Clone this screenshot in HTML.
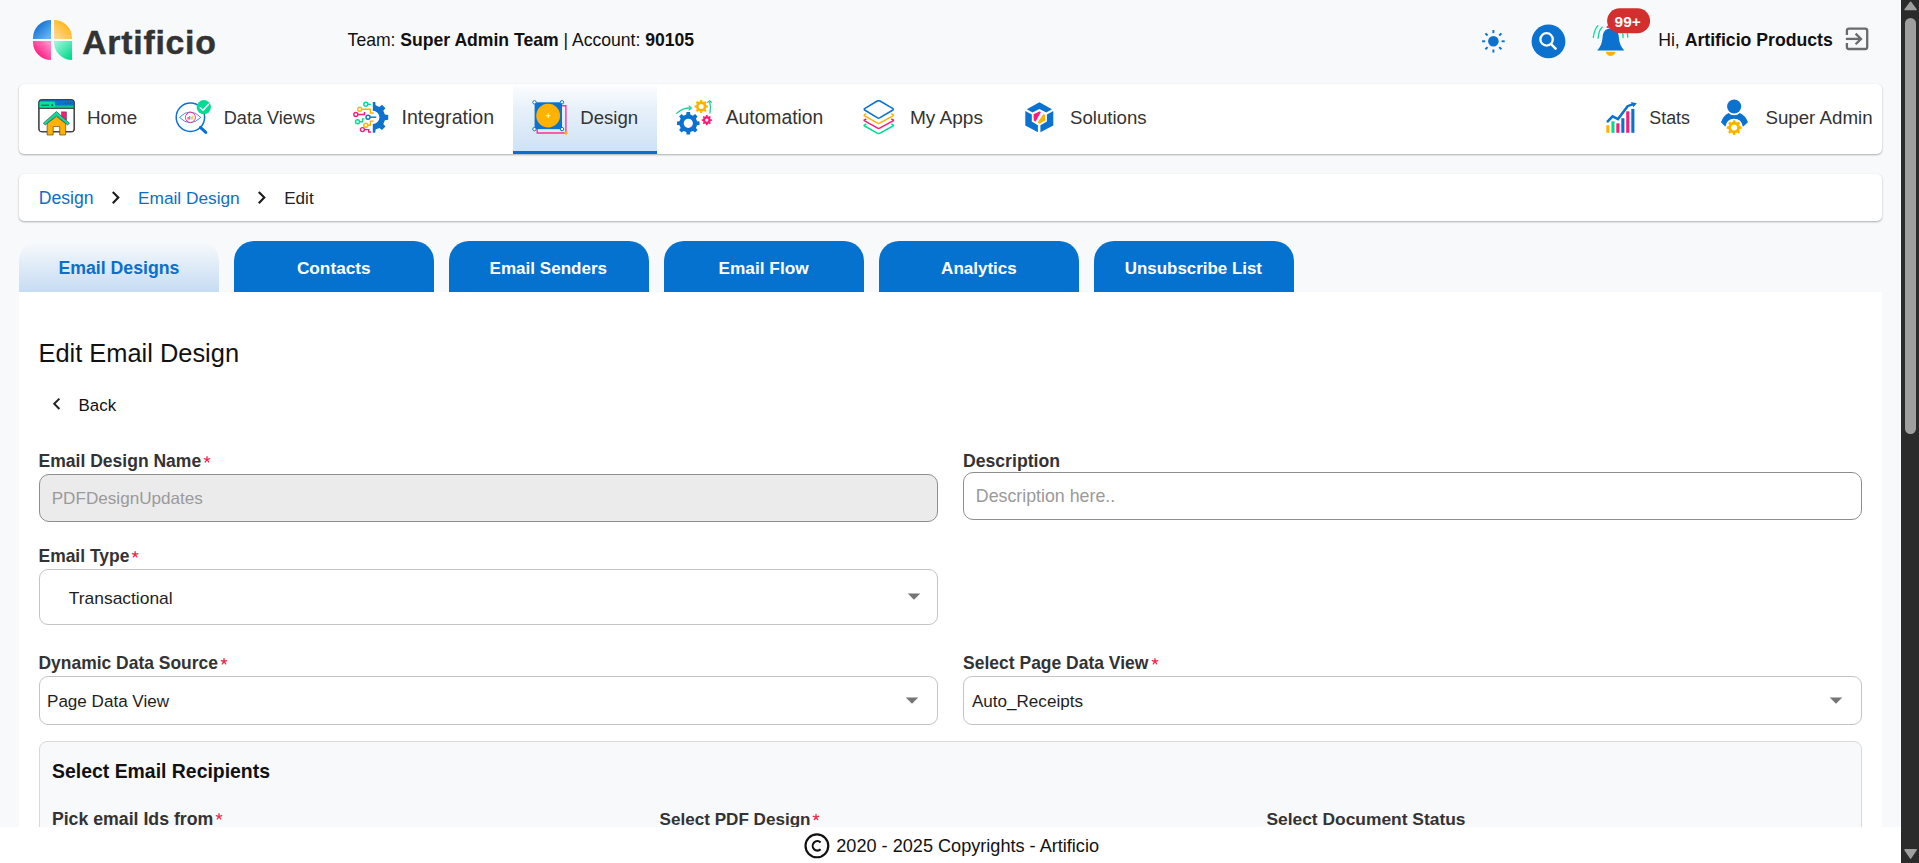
<!DOCTYPE html>
<html><head><meta charset="utf-8">
<style>
*{box-sizing:border-box;margin:0;padding:0}
html,body{width:1919px;height:863px;overflow:hidden}
body{background:#f8f9fb;font-family:"Liberation Sans",sans-serif;color:#212529;position:relative}
.abs{position:absolute;display:block}
.t{position:absolute;white-space:nowrap;line-height:1}
.t b{font-weight:700}
.ast{font-size:12.5px;color:#ef3340;font-weight:400}
.logo{left:32.6px;top:20px;width:40px;height:40px}
.q{position:absolute;width:18.8px;height:18.8px}
.q1{left:0;top:0;border-radius:18.8px 0 0 0;background:linear-gradient(135deg,#0464c8 10%,#64b5f8 90%)}
.q2{left:21.1px;top:0;border-radius:0 18.8px 0 0;background:linear-gradient(225deg,#ffae00 10%,#ffd78e 90%)}
.q3{left:0;top:21.1px;border-radius:0 0 0 18.8px;background:linear-gradient(45deg,#ff0073 10%,#ff91c8 90%)}
.q4{left:21.1px;top:21.1px;border-radius:0 0 0 18.8px;background:linear-gradient(315deg,#00dc8c 10%,#9cf3d8 90%)}
.card{position:absolute;background:#fff;border-radius:5px;box-shadow:0 1px 2px rgba(0,0,0,.30),0 0 1px rgba(0,0,0,.06)}
.active{position:absolute;left:513px;top:84px;width:144px;height:70px;background:linear-gradient(#fdfeff 0%,#e8f1fa 35%,#cfe2f5 100%);border-bottom:3px solid #0a6fcd}
.tab{position:absolute;top:241px;width:200px;height:51px;border-radius:20px 20px 0 0;background:#0672cf}
.tab.on{background:linear-gradient(#f8fafc 0%,#e6eff9 35%,#c6dcf3 100%)}
.panel{position:absolute;left:19px;top:292px;width:1863px;height:540px;background:#fff}
.inp{position:absolute;border:1px solid #8e8e8e;border-radius:10px;background:#fff}
.sel{position:absolute;border:1px solid #c4c4c4;border-radius:9px;background:#fff}
</style></head><body>
<div class="abs logo"><div class="q q1"></div><div class="q q2"></div><div class="q q3"></div><div class="q q4"></div></div>
<div class="card" style="left:19px;top:84px;width:1863px;height:70px"></div>
<div class="active"></div>
<div class="card" style="left:19px;top:174px;width:1863px;height:47px"></div>
<div class="tab on" style="left:19px"></div>
<div class="tab" style="left:234px"></div>
<div class="tab" style="left:449px"></div>
<div class="tab" style="left:664px"></div>
<div class="tab" style="left:879px"></div>
<div class="tab" style="left:1094px"></div>
<div class="panel"></div>
<div class="inp" style="left:39px;top:474px;width:899px;height:48px;background:#ebebeb"></div>
<div class="inp" style="left:963px;top:472px;width:899px;height:48px"></div>
<div class="sel" style="left:39px;top:569px;width:899px;height:56px"></div>
<div class="sel" style="left:39px;top:676px;width:899px;height:49px"></div>
<div class="sel" style="left:963px;top:676px;width:899px;height:49px"></div>
<div class="abs" style="left:39px;top:741px;width:1823px;height:130px;background:#f8f9fb;border:1px solid #d9d9d9;border-radius:8px"></div>
<svg class="abs" style="left:1470px;top:20px" width="46" height="42" viewBox="0 0 46 42"><circle cx="23.4" cy="21.3" r="5.3" fill="#0b73cf"/><line x1="31.60" y1="21.30" x2="34.70" y2="21.30" stroke="#0b73cf" stroke-width="1.9" stroke-linecap="butt"/><line x1="29.20" y1="27.10" x2="31.39" y2="29.29" stroke="#0b73cf" stroke-width="1.9" stroke-linecap="butt"/><line x1="23.40" y1="29.50" x2="23.40" y2="32.60" stroke="#0b73cf" stroke-width="1.9" stroke-linecap="butt"/><line x1="17.60" y1="27.10" x2="15.41" y2="29.29" stroke="#0b73cf" stroke-width="1.9" stroke-linecap="butt"/><line x1="15.20" y1="21.30" x2="12.10" y2="21.30" stroke="#0b73cf" stroke-width="1.9" stroke-linecap="butt"/><line x1="17.60" y1="15.50" x2="15.41" y2="13.31" stroke="#0b73cf" stroke-width="1.9" stroke-linecap="butt"/><line x1="23.40" y1="13.10" x2="23.40" y2="10.00" stroke="#0b73cf" stroke-width="1.9" stroke-linecap="butt"/><line x1="29.20" y1="15.50" x2="31.39" y2="13.31" stroke="#0b73cf" stroke-width="1.9" stroke-linecap="butt"/></svg>
<svg class="abs" style="left:1525px;top:18px" width="48" height="48" viewBox="0 0 48 48"><circle cx="23.5" cy="23.4" r="16.9" fill="#0b73cf"/><circle cx="21.6" cy="21.4" r="6.2" fill="none" stroke="#fff" stroke-width="2.3"/><line x1="26.1" y1="26.1" x2="30.6" y2="30.6" stroke="#fff" stroke-width="2.5" stroke-linecap="round"/></svg>
<svg class="abs" style="left:1588px;top:5px" width="66" height="55" viewBox="0 0 66 55"><path d="M5.3,32.3 Q6.5,24 9.9,20.6" fill="none" stroke="#00dc94" stroke-width="1.3" stroke-linecap="round"/><path d="M10.1,33.2 Q10.6,25.5 14.2,22.2" fill="none" stroke="#00dc94" stroke-width="1.3" stroke-linecap="round"/><path d="M34.8,28.8 Q35.2,30.8 35,32.7" fill="none" stroke="#00dc94" stroke-width="1.3" stroke-linecap="round"/><path d="M39.3,28.8 Q39.8,30.5 39.7,32.2" fill="none" stroke="#00dc94" stroke-width="1.3" stroke-linecap="round"/><circle cx="19.8" cy="21.9" r="1.2" fill="#ff1a7a"/><path d="M9.2,45.5 C12.5,42 14.2,38 14.6,32 C15,26 18,23.4 22.7,23.4 C27.4,23.4 30.4,26 30.8,32 C31.2,38 33,42 36.3,45.5Z" fill="#0b73cf"/><path d="M17.8,46.8 L27.4,46.8 C27,49.5 25,51 22.6,51 C20.2,51 18.2,49.5 17.8,46.8Z" fill="#ffb300"/><rect x="19.1" y="3.2" width="43" height="25.1" rx="12.55" fill="#d32f2f"/></svg>
<svg class="abs" style="left:1838px;top:20px" width="40" height="38" viewBox="0 0 40 38"><path d="M8.9,15 V10.7 Q8.9,8.7 10.9,8.7 H27.2 Q29.2,8.7 29.2,10.7 V27 Q29.2,29 27.2,29 H10.9 Q8.9,29 8.9,27 V22.9" fill="none" stroke="#6b6b6b" stroke-width="2.3"/><path d="M7.9,18.9 H22.8" stroke="#6b6b6b" stroke-width="2.3"/><path d="M17.6,13.6 L23,18.9 L17.6,24.2" fill="none" stroke="#6b6b6b" stroke-width="2.3"/></svg>
<svg class="abs" style="left:34px;top:96px" width="46" height="42" viewBox="0 0 46 42"><rect x="4.9" y="3.7" width="35.3" height="32.1" rx="2.8" fill="#fff" stroke="#333" stroke-width="1.1"/><path d="M4.9,6.5 Q4.9,3.7 7.7,3.7 H37.4 Q40.2,3.7 40.2,6.5 V12.2 H4.9Z" fill="#0b73cf"/><path d="M4.9,9.6 H40.2 V12.3 H4.9Z" fill="#12c58a"/><path d="M4.9,5.6 H20.6 L21.2,9.6 V12.3 H4.9Z" fill="#00e59b"/><line x1="7.2" y1="9.2" x2="15" y2="9.2" stroke="#333" stroke-width="0.9"/><circle cx="18.2" cy="9.1" r="0.9" fill="#333"/><circle cx="31.3" cy="7" r="0.6" fill="#333"/><circle cx="34.2" cy="7" r="0.6" fill="#333"/><circle cx="36.9" cy="7" r="0.6" fill="#333"/><path d="M4.9,12.3 H40.2" stroke="#333" stroke-width="1"/><rect x="4.9" y="3.7" width="35.3" height="32.1" rx="2.8" fill="none" stroke="#3a3a3a" stroke-width="0.95"/><rect x="27.6" y="15.9" width="4.8" height="8" fill="#ff1a7a" stroke="#333" stroke-width="0.5"/><path d="M13.1,39 V27.5 L22.4,20.6 L31.7,27.5 V39 H25.7 V30.6 H19.2 V39Z" fill="#ffb300" stroke="#333" stroke-width="0.6"/><path d="M9.3,27.2 L22.4,15.6 L35.5,27.2 L33.5,28.9 L22.4,19.6 L11.3,28.9Z" fill="#00e59b" stroke="#333" stroke-width="0.6" stroke-linejoin="round"/></svg>
<svg class="abs" style="left:170px;top:96px" width="46" height="42" viewBox="0 0 46 42"><circle cx="20.4" cy="21.2" r="14.2" fill="none" stroke="#0b73cf" stroke-width="1.5"/><line x1="30.4" y1="31.4" x2="35.8" y2="36.4" stroke="#0b73cf" stroke-width="3" stroke-linecap="round"/><path d="M9.5,21.4 Q20.2,10.5 30.8,21.4 Q20.2,32 9.5,21.4Z" fill="none" stroke="#0b73cf" stroke-width="0.8"/><circle cx="20.4" cy="21.4" r="5" fill="#fff" stroke="#ff1a7a" stroke-width="0.9"/><rect x="17.6" y="21" width="1.1" height="2.6" fill="#ff1a7a"/><rect x="19.1" y="20" width="1.1" height="3.6" fill="#00dc94"/><rect x="20.6" y="20.6" width="1.1" height="3" fill="#9ab8f0"/><rect x="22.1" y="19.6" width="1.2" height="4" fill="#ffc54a"/><circle cx="33.8" cy="11.2" r="7.1" fill="#00dc94"/><path d="M30.2,11.8 L33,14.3 L38.4,8.4" fill="none" stroke="#fff" stroke-width="1.5" stroke-linecap="round" stroke-linejoin="round"/></svg>
<svg class="abs" style="left:348px;top:96px" width="46" height="42" viewBox="0 0 46 42"><defs><clipPath id="cr"><rect x="24.8" y="0" width="30" height="42"/></clipPath></defs><g clip-path="url(#cr)"><path fill-rule="evenodd" d="M22.02,9.31 L22.36,5.99 L27.24,5.99 L27.58,9.31 L31.38,10.89 L33.97,8.78 L37.42,12.23 L35.31,14.82 L36.89,18.62 L40.21,18.96 L40.21,23.84 L36.89,24.18 L35.31,27.98 L37.42,30.57 L33.97,34.02 L31.38,31.91 L27.58,33.49 L27.24,36.81 L22.36,36.81 L22.02,33.49 L18.22,31.91 L15.63,34.02 L12.18,30.57 L14.29,27.98 L12.71,24.18 L9.39,23.84 L9.39,18.96 L12.71,18.62 L14.29,14.82 L12.18,12.23 L15.63,8.78 L18.22,10.89Z M31.4,21.4 A6.6,6.6 0 1 0 18.2,21.4 A6.6,6.6 0 1 0 31.4,21.4Z" fill="#0b73cf"/></g><path d="M19.80,8.30 L22.9,8.3" fill="none" stroke="#00dc94" stroke-width="1.4"/><circle cx="17.8" cy="8.3" r="2" fill="#fff" stroke="#00dc94" stroke-width="1.4"/><path d="M13.70,13.20 L22.4,13.2 L22.4,17 L25.8,17" fill="none" stroke="#ffb300" stroke-width="1.4"/><circle cx="11.7" cy="13.2" r="2" fill="#fff" stroke="#ffb300" stroke-width="1.4"/><path d="M9.80,18.50 L16.5,18.5 L16.5,16.1" fill="none" stroke="#ff1a7a" stroke-width="1.4"/><circle cx="7.8" cy="18.5" r="2" fill="#fff" stroke="#ff1a7a" stroke-width="1.4"/><path d="M22.00,21.20 L28.2,21.2" fill="none" stroke="#0b73cf" stroke-width="1.4"/><circle cx="20" cy="21.2" r="2" fill="#fff" stroke="#0b73cf" stroke-width="1.4"/><path d="M11.50,25.80 L14.6,25.8 L14.6,22.9 L16.4,22.9" fill="none" stroke="#00dc94" stroke-width="1.4"/><circle cx="9.5" cy="25.8" r="2" fill="#fff" stroke="#00dc94" stroke-width="1.4"/><path d="M19.80,29.20 L22.4,29.2 L22.4,25.1 L25.8,25.1" fill="none" stroke="#ffb300" stroke-width="1.4"/><circle cx="17.8" cy="29.2" r="2" fill="#fff" stroke="#ffb300" stroke-width="1.4"/><path d="M16.40,33.60 L20.7,33.6 L20.7,36 L22.9,36" fill="none" stroke="#ff1a7a" stroke-width="1.4"/><circle cx="14.4" cy="33.6" r="2" fill="#fff" stroke="#ff1a7a" stroke-width="1.4"/></svg>
<svg class="abs" style="left:526px;top:96px" width="46" height="42" viewBox="0 0 46 42"><path d="M36,9.7 H39.9 V37 H11.2 V33.1" fill="none" stroke="#ff2f93" stroke-width="1.35"/><rect x="8.6" y="6.3" width="27.4" height="26.8" fill="#0b73cf"/><circle cx="22.15" cy="19.7" r="11.9" fill="#ffb300"/><path d="M22.15,17.4 V22 M19.9,19.7 H24.4" stroke="#fff" stroke-width="0.9"/><circle cx="8.5" cy="6.3" r="1.7" fill="#fff" stroke="#0b73cf" stroke-width="1"/><circle cx="36" cy="6.3" r="1.7" fill="#fff" stroke="#0b73cf" stroke-width="1"/><circle cx="8.5" cy="33.1" r="1.7" fill="#fff" stroke="#0b73cf" stroke-width="1"/><circle cx="36" cy="33.1" r="1.7" fill="#fff" stroke="#0b73cf" stroke-width="1"/><circle cx="39.9" cy="37" r="1.7" fill="#ffb300"/></svg>
<svg class="abs" style="left:671px;top:96px" width="46" height="42" viewBox="0 0 46 42"><path d="M15.29,18.53 L15.52,16.04 L19.08,16.04 L19.31,18.53 L22.08,19.67 L24.00,18.08 L26.52,20.60 L24.93,22.52 L26.07,25.29 L28.56,25.52 L28.56,29.08 L26.07,29.31 L24.93,32.08 L26.52,34.00 L24.00,36.52 L22.08,34.93 L19.31,36.07 L19.08,38.56 L15.52,38.56 L15.29,36.07 L12.52,34.93 L10.60,36.52 L8.08,34.00 L9.67,32.08 L8.53,29.31 L6.04,29.08 L6.04,25.52 L8.53,25.29 L9.67,22.52 L8.08,20.60 L10.60,18.08 L12.52,19.67Z" fill="#0b73cf"/><circle cx="17.3" cy="27.3" r="4.6" fill="#fff"/><path d="M29.04,5.43 L29.15,3.88 L31.25,3.88 L31.36,5.43 L32.96,6.09 L34.14,5.08 L35.62,6.56 L34.61,7.74 L35.27,9.34 L36.82,9.45 L36.82,11.55 L35.27,11.66 L34.61,13.26 L35.62,14.44 L34.14,15.92 L32.96,14.91 L31.36,15.57 L31.25,17.12 L29.15,17.12 L29.04,15.57 L27.44,14.91 L26.26,15.92 L24.78,14.44 L25.79,13.26 L25.13,11.66 L23.58,11.55 L23.58,9.45 L25.13,9.34 L25.79,7.74 L24.78,6.56 L26.26,5.08 L27.44,6.09Z" fill="#ffb300"/><circle cx="30.2" cy="10.5" r="2.5" fill="#fff"/><path d="M34.93,20.30 L35.00,19.06 L36.60,19.06 L36.67,20.30 L37.87,20.79 L38.80,19.97 L39.93,21.10 L39.11,22.03 L39.60,23.23 L40.84,23.30 L40.84,24.90 L39.60,24.97 L39.11,26.17 L39.93,27.10 L38.80,28.23 L37.87,27.41 L36.67,27.90 L36.60,29.14 L35.00,29.14 L34.93,27.90 L33.73,27.41 L32.80,28.23 L31.67,27.10 L32.49,26.17 L32.00,24.97 L30.76,24.90 L30.76,23.30 L32.00,23.23 L32.49,22.03 L31.67,21.10 L32.80,19.97 L33.73,20.79Z" fill="#ff1a7a"/><circle cx="35.8" cy="24.1" r="1.6" fill="#fff"/><path d="M5.6,17.4 Q11,12 19,12" fill="none" stroke="#1fd196" stroke-width="1.3" stroke-linecap="round"/><path d="M18,9.9 L20.4,12 L18,14" fill="none" stroke="#1fd196" stroke-width="1.2" stroke-linejoin="round" stroke-linecap="round"/><path d="M38.9,17 Q40.3,11 38.7,6" fill="none" stroke="#1fd196" stroke-width="1.3" stroke-linecap="round"/><path d="M36.8,6.3 L38.6,4.8 L40.4,6.2" fill="none" stroke="#1fd196" stroke-width="1.3" stroke-linejoin="round" stroke-linecap="round"/></svg>
<svg class="abs" style="left:856px;top:96px" width="46" height="42" viewBox="0 0 46 42"><path d="M10.3,27.9 L8.6,28.9 Q7.6,29.3 8.6,30.0 L21.6,37.3 Q22.6,37.9 23.6,37.3 L37,30.0 Q38,29.3 37,28.9 L35.3,27.9" fill="none" stroke="#00dc94" stroke-width="1.5" stroke-linejoin="round"/><path d="M10.3,22.8 L8.6,23.8 Q7.6,24.2 8.6,24.9 L21.6,32.2 Q22.6,32.8 23.6,32.2 L37,24.9 Q38,24.2 37,23.8 L35.3,22.8" fill="none" stroke="#ff1a7a" stroke-width="1.5" stroke-linejoin="round"/><path d="M10.3,17.7 L8.6,18.7 Q7.6,19.1 8.6,19.8 L21.6,27.1 Q22.6,27.7 23.6,27.1 L37,19.8 Q38,19.1 37,18.7 L35.3,17.7" fill="none" stroke="#ffb300" stroke-width="1.5" stroke-linejoin="round"/><path d="M22.6,4.9 Q21.9,4.6 21.2,5 L8.6,12.6 Q7.9,13.3 8.6,14 L21.6,21.9 Q22.6,22.5 23.6,21.9 L37,14 Q37.7,13.3 37,12.6 L24,5 Q23.3,4.6 22.6,4.9Z" fill="#fff" stroke="#0b73cf" stroke-width="1.6" stroke-linejoin="round"/></svg>
<svg class="abs" style="left:1016px;top:96px" width="46" height="42" viewBox="0 0 46 42"><path d="M23.4,6.3 L36,13.3 L30.3,16.6 L23.4,13 L16.5,16.6 L10.8,13.3Z" fill="#0b73cf"/><path d="M9.3,15.1 L15.8,18.6 L15.8,25.6 L21.9,29.2 L21.9,36.3 L9.3,29.5Z" fill="#0b73cf"/><path d="M37.3,15.1 L30.9,18.6 L30.9,25.6 L24.4,29.2 L24.4,36.3 L37.3,29.5Z" fill="#0b73cf"/><path d="M17.5,18.3 L23.9,15.3 L24.8,16.3 L19.5,25.8 L17.8,24.6Z" fill="#ff1a7a"/><path d="M27.3,18 L29,18.7 L29,24.6 L23.4,27.8 L21.7,26.5Z" fill="#ffb300"/></svg>
<svg class="abs" style="left:1598px;top:96px" width="46" height="42" viewBox="0 0 46 42"><rect x="8.3" y="29.2" width="3.1" height="7.6" fill="#ffb300"/><rect x="13.4" y="25.3" width="3.1" height="11.5" fill="#00dc94"/><rect x="18.3" y="27.3" width="3.1" height="9.5" fill="#ff1a7a"/><rect x="23.3" y="22.2" width="3.1" height="14.6" fill="#0b73cf"/><rect x="28.2" y="15.3" width="3.1" height="21.5" fill="#ff1a7a"/><rect x="33.3" y="12.9" width="3.1" height="23.9" fill="#0b73cf"/><path d="M9,26.2 L14.6,20.4 L20,23.1 L29.6,10.2 L35,8.2" fill="none" stroke="#0b73cf" stroke-width="2.5" stroke-linejoin="miter"/><path d="M32.9,5.9 L38.8,7.2 L35.4,11.2Z" fill="#0b73cf"/></svg>
<svg class="abs" style="left:1712px;top:96px" width="46" height="42" viewBox="0 0 46 42"><circle cx="22.15" cy="10.5" r="7.05" fill="#0b73cf"/><path d="M16.6,17 Q18.5,19.3 22.15,19.3 Q25.8,19.3 27.7,17 Q33.5,19.5 36,26.3 L30.9,30.7 Q29.6,23 22.15,22.8 Q14.7,23 13.4,30.7 L9,26.3 Q11.3,19.5 16.6,17Z" fill="#0b73cf"/><path d="M20.83,25.85 L20.98,24.19 L23.32,24.19 L23.47,25.85 L25.28,26.60 L26.56,25.53 L28.22,27.19 L27.15,28.47 L27.90,30.28 L29.56,30.43 L29.56,32.77 L27.90,32.92 L27.15,34.73 L28.22,36.01 L26.56,37.67 L25.28,36.60 L23.47,37.35 L23.32,39.01 L20.98,39.01 L20.83,37.35 L19.02,36.60 L17.74,37.67 L16.08,36.01 L17.15,34.73 L16.40,32.92 L14.74,32.77 L14.74,30.43 L16.40,30.28 L17.15,28.47 L16.08,27.19 L17.74,25.53 L19.02,26.60Z" fill="#ffb300"/><circle cx="22.15" cy="31.6" r="2.9" fill="#fff"/></svg>
<div class="t" style="left:82.2px;top:25.7px;font-size:33.8px;font-weight:700;color:#333;letter-spacing:0.75px;-webkit-text-stroke:0.45px #333">Artificio</div>
<div class="t" style="left:347.6px;top:31.9px;font-size:17.59px;font-weight:400;color:#111;">Team: <b>Super Admin Team</b> | Account: <b>90105</b></div>
<div class="t" style="left:1658.2px;top:31.8px;font-size:17.67px;font-weight:400;color:#111;">Hi, <b>Artificio Products</b></div>
<div class="t" style="left:1614.6px;top:13.5px;font-size:15.4px;font-weight:700;color:#fff;">99+</div>
<div class="t" style="left:87.0px;top:109.0px;font-size:18.82px;font-weight:400;color:#333;">Home</div>
<div class="t" style="left:223.8px;top:108.9px;font-size:18.13px;font-weight:400;color:#333;">Data Views</div>
<div class="t" style="left:401.5px;top:108.3px;font-size:19.63px;font-weight:400;color:#333;">Integration</div>
<div class="t" style="left:580.2px;top:109.1px;font-size:18.62px;font-weight:400;color:#333;">Design</div>
<div class="t" style="left:725.7px;top:107.9px;font-size:19.3px;font-weight:400;color:#333;">Automation</div>
<div class="t" style="left:909.9px;top:108.1px;font-size:19.06px;font-weight:400;color:#333;">My Apps</div>
<div class="t" style="left:1070.0px;top:109.1px;font-size:18.64px;font-weight:400;color:#333;">Solutions</div>
<div class="t" style="left:1649.3px;top:109.8px;font-size:17.85px;font-weight:400;color:#333;">Stats</div>
<div class="t" style="left:1765.4px;top:109.0px;font-size:18.73px;font-weight:400;color:#333;">Super Admin</div>
<div class="t" style="left:38.8px;top:189.9px;font-size:17.61px;font-weight:400;color:#0b6fca;">Design</div>
<div class="t" style="left:138.0px;top:190.2px;font-size:17.27px;font-weight:400;color:#0b6fca;">Email Design</div>
<div class="t" style="left:284.2px;top:190.3px;font-size:17.13px;font-weight:400;color:#222;">Edit</div>
<svg class="abs" style="left:102.9px;top:184.8px" width="25.200000000000003" height="25.200000000000003" viewBox="0 0 24 24"><path d="M10 6L8.59 7.41 13.17 12l-4.58 4.59L10 18l6-6z" fill="#1a1a1a"/></svg>
<svg class="abs" style="left:249.2px;top:184.8px" width="25.200000000000003" height="25.200000000000003" viewBox="0 0 24 24"><path d="M10 6L8.59 7.41 13.17 12l-4.58 4.59L10 18l6-6z" fill="#1a1a1a"/></svg>
<div class="t" style="left:58.4px;top:260.0px;font-size:17.72px;font-weight:700;color:#0b6fca;">Email Designs</div>
<div class="t" style="left:296.9px;top:260.4px;font-size:17.24px;font-weight:700;color:#fff;">Contacts</div>
<div class="t" style="left:489.6px;top:259.9px;font-size:17.06px;font-weight:700;color:#fff;">Email Senders</div>
<div class="t" style="left:718.5px;top:260.4px;font-size:17.28px;font-weight:700;color:#fff;">Email Flow</div>
<div class="t" style="left:941.1px;top:259.9px;font-size:17.03px;font-weight:700;color:#fff;">Analytics</div>
<div class="t" style="left:1124.8px;top:260.7px;font-size:16.92px;font-weight:700;color:#fff;">Unsubscribe List</div>
<div class="t" style="left:38.5px;top:341.0px;font-size:25.42px;font-weight:400;color:#111;">Edit Email Design</div>
<svg class="abs" style="left:44.56px;top:391.7px" width="23.52" height="23.52" viewBox="0 0 24 24"><path d="M15.41 7.41L14 6l-6 6 6 6 1.41-1.41L10.83 12z" fill="#222"/></svg>
<div class="t" style="left:78.6px;top:397.5px;font-size:16.87px;font-weight:400;color:#111;">Back</div>
<div class="t" style="left:38.5px;top:452.8px;font-size:17.54px;font-weight:700;color:#333;">Email Design Name</div>
<svg class="abs" style="left:0;top:0;overflow:visible" width="1" height="1"><path d="M207.00,459.60 L207.00,456.70 M207.00,459.60 L209.76,458.70 M207.00,459.60 L208.70,461.95 M207.00,459.60 L205.30,461.95 M207.00,459.60 L204.24,458.70 " stroke="#ef2f4e" stroke-width="1.35" stroke-linecap="round" fill="none"/></svg>
<div class="t" style="left:962.9px;top:452.6px;font-size:17.67px;font-weight:700;color:#333;">Description</div>
<div class="t" style="left:38.5px;top:547.8px;font-size:17.47px;font-weight:700;color:#333;">Email Type</div>
<svg class="abs" style="left:0;top:0;overflow:visible" width="1" height="1"><path d="M135.10,554.50 L135.10,551.60 M135.10,554.50 L137.86,553.60 M135.10,554.50 L136.80,556.85 M135.10,554.50 L133.40,556.85 M135.10,554.50 L132.34,553.60 " stroke="#ef2f4e" stroke-width="1.35" stroke-linecap="round" fill="none"/></svg>
<div class="t" style="left:38.5px;top:655.0px;font-size:17.45px;font-weight:700;color:#333;">Dynamic Data Source</div>
<svg class="abs" style="left:0;top:0;overflow:visible" width="1" height="1"><path d="M224.00,661.50 L224.00,658.60 M224.00,661.50 L226.76,660.60 M224.00,661.50 L225.70,663.85 M224.00,661.50 L222.30,663.85 M224.00,661.50 L221.24,660.60 " stroke="#ef2f4e" stroke-width="1.35" stroke-linecap="round" fill="none"/></svg>
<div class="t" style="left:963.1px;top:655.0px;font-size:17.49px;font-weight:700;color:#333;">Select Page Data View</div>
<svg class="abs" style="left:0;top:0;overflow:visible" width="1" height="1"><path d="M1155.00,661.50 L1155.00,658.60 M1155.00,661.50 L1157.76,660.60 M1155.00,661.50 L1156.70,663.85 M1155.00,661.50 L1153.30,663.85 M1155.00,661.50 L1152.24,660.60 " stroke="#ef2f4e" stroke-width="1.35" stroke-linecap="round" fill="none"/></svg>
<div class="t" style="left:51.7px;top:490.1px;font-size:17.12px;font-weight:400;color:#9a9a9a;">PDFDesignUpdates</div>
<div class="t" style="left:975.8px;top:487.9px;font-size:17.8px;font-weight:400;color:#9a9a9a;">Description here..</div>
<div class="t" style="left:68.8px;top:590.1px;font-size:17.41px;font-weight:400;color:#1e1e1e;">Transactional</div>
<div class="t" style="left:47.0px;top:693.2px;font-size:17.07px;font-weight:400;color:#1e1e1e;">Page Data View</div>
<div class="t" style="left:971.9px;top:693.2px;font-size:17.08px;font-weight:400;color:#1e1e1e;">Auto_Receipts</div>
<svg class="abs" style="left:898.85px;top:581.3px" width="30.0" height="30.0" viewBox="0 0 24 24"><path d="M7 10l5 5 5-5z" fill="#757575"/></svg>
<svg class="abs" style="left:897.15px;top:685.3px" width="30.0" height="30.0" viewBox="0 0 24 24"><path d="M7 10l5 5 5-5z" fill="#757575"/></svg>
<svg class="abs" style="left:1821.25px;top:685.4px" width="30.0" height="30.0" viewBox="0 0 24 24"><path d="M7 10l5 5 5-5z" fill="#757575"/></svg>
<div class="t" style="left:52.1px;top:762.3px;font-size:19.42px;font-weight:700;color:#111;">Select Email Recipients</div>
<div class="t" style="left:51.9px;top:810.6px;font-size:17.71px;font-weight:700;color:#333;">Pick email Ids from</div>
<svg class="abs" style="left:0;top:0;overflow:visible" width="1" height="1"><path d="M219.00,816.60 L219.00,813.70 M219.00,816.60 L221.76,815.70 M219.00,816.60 L220.70,818.95 M219.00,816.60 L217.30,818.95 M219.00,816.60 L216.24,815.70 " stroke="#ef2f4e" stroke-width="1.35" stroke-linecap="round" fill="none"/></svg>
<div class="t" style="left:659.6px;top:811.1px;font-size:17.09px;font-weight:700;color:#333;">Select PDF Design</div>
<svg class="abs" style="left:0;top:0;overflow:visible" width="1" height="1"><path d="M816.00,817.20 L816.00,814.30 M816.00,817.20 L818.76,816.30 M816.00,817.20 L817.70,819.55 M816.00,817.20 L814.30,819.55 M816.00,817.20 L813.24,816.30 " stroke="#ef2f4e" stroke-width="1.35" stroke-linecap="round" fill="none"/></svg>
<div class="t" style="left:1266.4px;top:810.9px;font-size:17.4px;font-weight:700;color:#333;">Select Document Status</div>
<div class="abs" style="left:0;top:827px;width:1901px;height:36px;background:#fff"></div>
<svg class="abs" style="left:798px;top:828px" width="40" height="35" viewBox="0 0 40 35"><circle cx="18.9" cy="17.85" r="11.4" fill="none" stroke="#111" stroke-width="2.2"/><path d="M22.6,14.5 A4.6,4.8 0 1 0 22.6,21.2" fill="none" stroke="#111" stroke-width="2.1"/></svg>
<div class="t" style="left:836.3px;top:836.6px;font-size:18.13px;font-weight:400;color:#111;">2020 - 2025 Copyrights - Artificio</div>
<div class="abs" style="left:1901px;top:0;width:18px;height:863px;background:#2b2b2b"></div>
<div class="abs" style="left:1905px;top:17.5px;width:11.2px;height:416.5px;background:#9f9f9f;border-radius:5.6px"></div>
<svg class="abs" style="left:1901px;top:0" width="18" height="18" viewBox="0 0 18 18"><path d="M4,9.6 L9.6,2.2 L15.2,9.6Z" fill="#9f9f9f" stroke="#9f9f9f" stroke-width="1.4" stroke-linejoin="round"/></svg>
<svg class="abs" style="left:1901px;top:845px" width="18" height="18" viewBox="0 0 18 18"><path d="M4,4.8 L15.2,4.8 L9.6,13.2Z" fill="#9f9f9f" stroke="#9f9f9f" stroke-width="1.4" stroke-linejoin="round"/></svg>
</body></html>
